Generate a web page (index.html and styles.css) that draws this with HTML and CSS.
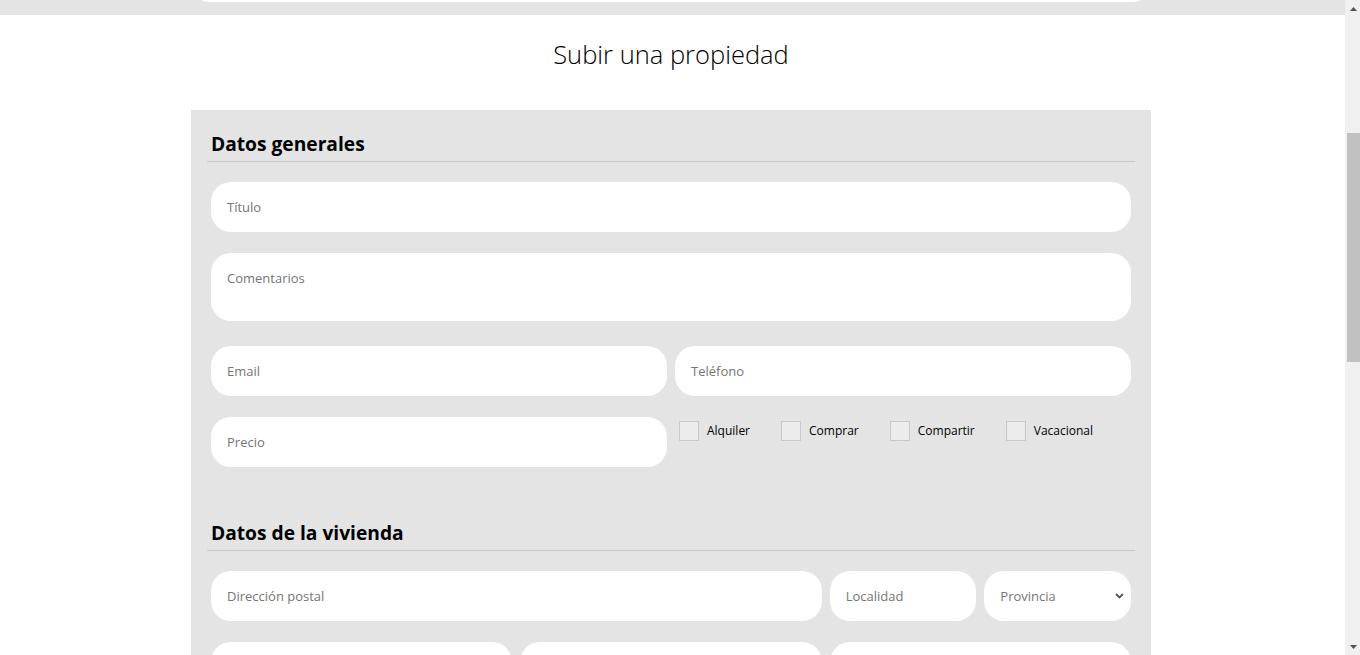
FILE: index.html
```html
<!DOCTYPE html>
<html lang="es">
<head>
<meta charset="utf-8">
<title>Subir una propiedad</title>
<link rel="stylesheet" href="styles.css">
</head>
<body>
<div class="topstrip"><div class="searchbox"></div></div>
<main class="page">
  <h1 class="page-title">Subir una propiedad</h1>
  <form class="panel">
    <h2 class="section-title">Datos generales</h2>
    <input class="field" type="text" placeholder="Título">
    <textarea class="field area" placeholder="Comentarios"></textarea>
    <div class="row two">
      <input class="field" type="text" placeholder="Email">
      <input class="field" type="text" placeholder="Teléfono">
    </div>
    <div class="row two">
      <input class="field" type="text" placeholder="Precio">
      <div class="checks">
        <label class="check"><span class="box"></span>Alquiler</label>
        <label class="check"><span class="box"></span>Comprar</label>
        <label class="check"><span class="box"></span>Compartir</label>
        <label class="check"><span class="box"></span>Vacacional</label>
      </div>
    </div>
    <h2 class="section-title second">Datos de la vivienda</h2>
    <div class="row three">
      <input class="field span2" type="text" placeholder="Dirección postal">
      <div class="pair">
        <input class="field" type="text" placeholder="Localidad">
        <div class="select-wrap">
          <select class="field select"><option>Provincia</option></select>
          <svg class="chev" width="9" height="6" viewBox="0 0 9 6"><path d="M1 1 L4.5 4.5 L8 1" fill="none" stroke="#555" stroke-width="1.8"/></svg>
        </div>
      </div>
    </div>
    <div class="row three">
      <input class="field" type="text" placeholder="Metros">
      <input class="field" type="text" placeholder="Habitaciones">
      <input class="field" type="text" placeholder="Baños">
    </div>
    <div class="row three">
      <input class="field" type="text" placeholder="Planta">
      <input class="field" type="text" placeholder="Año">
      <input class="field" type="text" placeholder="Estado">
    </div>
  </form>
</main>
<aside class="scrollbar" aria-hidden="true">
  <div class="sb-btn"><svg width="7" height="4" viewBox="0 0 7 4"><path d="M0 4 L3.5 0 L7 4 Z" fill="#505050"/></svg></div>
  <div class="sb-track"><div class="sb-thumb"></div></div>
  <div class="sb-btn"><svg width="7" height="4" viewBox="0 0 7 4"><path d="M0 0 L3.5 4 L7 0 Z" fill="#505050"/></svg></div>
</aside>
</body>
</html>
```
FILE: styles.css
```css
* { box-sizing: border-box; }
body {
  margin: 0;
  background: #ffffff;
  font-family: "Open Sans", "Liberation Sans", sans-serif;
  color: #000;
  padding-right: 15px;
}
.topstrip {
  height: 15px;
  background: #e4e4e4;
  overflow: hidden;
  display: flex;
  justify-content: center;
  padding-right: 3px;
}
.searchbox {
  width: 950px;
  height: 30px;
  margin-top: -28px;
  background: #fff;
  border-radius: 12px;
}
.page {
  padding-right: 3px;
}
.page-title {
  margin: 20px 0 37px;
  font-size: 25.5px;
  font-weight: 300;
  line-height: 38px;
  text-align: center;
  color: #000;
}
.panel {
  width: 960px;
  margin: 0 auto;
  background: #e4e4e4;
  padding: 20px 20px 40px;
}
.section-title {
  margin: 0 -4px 20px;
  padding: 0 4px 4px;
  font-size: 19.2px;
  font-weight: 700;
  line-height: 27px;
  border-bottom: 1px solid #c9c9c9;
}
.section-title.second { margin-top: 52px; }
.field {
  display: block;
  width: 100%;
  height: 50px;
  border: none;
  border-radius: 20px;
  background: #fff;
  padding: 0 16px;
  font-family: "Open Sans", "Liberation Sans", sans-serif;
  font-size: 13px;
  color: #333;
  outline: none;
  margin: 0;
}
.field::placeholder { color: #757575; }
.area {
  height: 68px;
  padding: 16px;
  resize: none;
  margin-top: 21px;
  margin-bottom: 25px;
}
.row {
  display: grid;
  gap: 8px;
  margin-bottom: 21px;
}
.row.two { grid-template-columns: 1fr 1fr; }
.row.three { grid-template-columns: 1fr 1fr 1fr; }
.span2 { grid-column: span 2; }
.pair {
  display: grid;
  grid-template-columns: 1fr 1fr;
  gap: 8px;
}
.select-wrap { position: relative; }
.select {
  appearance: none;
  -webkit-appearance: none;
  color: #757575;
  padding-right: 24px;
}
.chev {
  position: absolute;
  right: 7px;
  top: 22px;
  pointer-events: none;
}
.checks {
  display: flex;
  align-items: flex-start;
  gap: 31px;
  padding: 4px 0 0 4px;
}
.check {
  display: flex;
  align-items: center;
  gap: 8px;
  font-size: 12px;
  line-height: 18px;
  color: #000;
}
.check .box {
  width: 20px;
  height: 20px;
  background: #ececec;
  border: 1px solid #c8c8c8;
}
.scrollbar {
  position: fixed;
  top: 0;
  right: 0;
  width: 15px;
  height: 100vh;
  background: #f0f0f0;
  display: flex;
  flex-direction: column;
}
.sb-btn {
  height: 17px;
  display: flex;
  align-items: center;
  justify-content: center;
  padding-left: 1px;
}
.sb-track {
  flex: 1;
  padding-top: 116px;
  padding-left: 2px;
}
.sb-thumb {
  height: 229px;
  background: #c1c1c1;
}
```
